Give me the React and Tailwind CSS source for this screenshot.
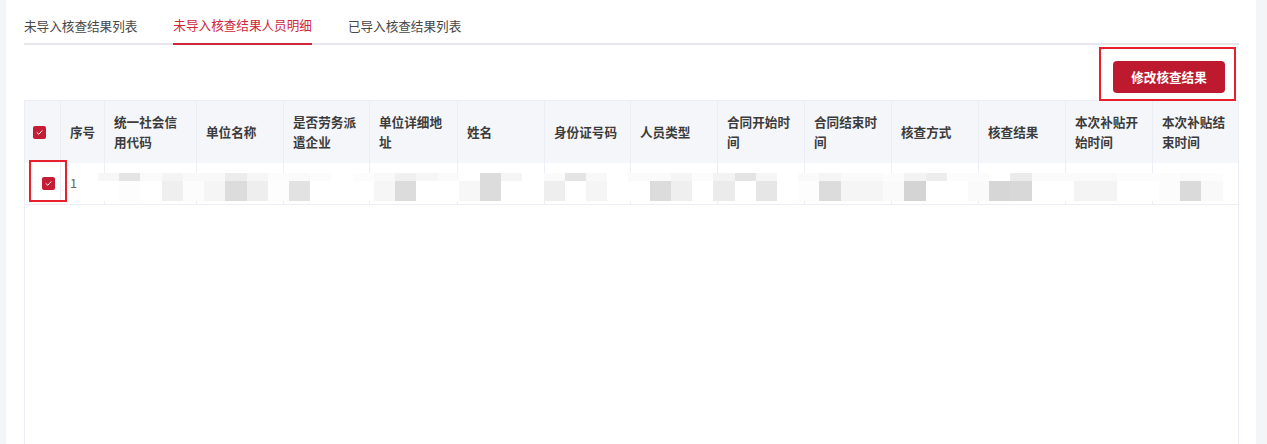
import React from "react";

const headers = [
  "序号",
  "统一社会信用代码",
  "单位名称",
  "是否劳务派遣企业",
  "单位详细地址",
  "姓名",
  "身份证号码",
  "人员类型",
  "合同开始时间",
  "合同结束时间",
  "核查方式",
  "核查结果",
  "本次补贴开始时间",
  "本次补贴结束时间",
];

// masked cell contents: [lower tile, upper tile]
const W = "bg-white";
const tiles = [
  [W, "bg-[#f7f7f7]"],
  ["bg-[#fdfdfd]", "bg-[#e4e4e4]"],
  [W, "bg-[#fafafa]"],
  ["bg-[#efefef]", "bg-[#f4f4f4]"],
  ["bg-[#fcfcfc]", "bg-[#f9f9f9]"],
  ["bg-[#f5f5f5]", "bg-[#f9f9f9]"],
  ["bg-[#dcdcdc]", "bg-[#ececec]"],
  ["bg-[#eeeeee]", "bg-[#f6f6f6]"],
  ["bg-[#fdfdfd]", "bg-[#fcfcfc]"],
  ["bg-[#e2e2e2]", "bg-[#fafafa]"],
  [W, "bg-[#fcfcfc]"],
  [W, W],
  [W, "bg-[#fcfcfc]"],
  ["bg-[#f6f6f6]", "bg-[#f9f9f9]"],
  ["bg-[#dcdcdc]", "bg-[#f0f0f0]"],
  [W, "bg-[#f6f6f6]"],
  [W, "bg-[#fafafa]"],
  ["bg-[#f7f7f7]", W],
  ["bg-[#dcdcdc]", "bg-[#dcdcdc]"],
  [W, "bg-[#f5f5f5]"],
  [W, W],
  ["bg-[#eeeeee]", "bg-[#fafafa]"],
  [W, "bg-[#e4e4e4]"],
  ["bg-[#f5f5f5]", "bg-[#f8f8f8]"],
  [W, W],
  [W, "bg-[#fafafa]"],
  ["bg-[#dcdcdc]", "bg-[#fafafa]"],
  ["bg-[#efefef]", "bg-[#f5f5f5]"],
  [W, "bg-[#fcfcfc]"],
  ["bg-[#ebebeb]", "bg-[#f3f3f3]"],
  [W, "bg-[#e4e4e4]"],
  ["bg-[#e6e6e6]", "bg-[#f6f6f6]"],
  [W, W],
  ["bg-[#fdfdfd]", "bg-[#fafafa]"],
  ["bg-[#dcdcdc]", "bg-[#f5f5f5]"],
  ["bg-[#f5f5f5]", "bg-[#fafafa]"],
  ["bg-[#f5f5f5]", "bg-[#fafafa]"],
  ["bg-[#fafafa]", "bg-[#fcfcfc]"],
  ["bg-[#d4d4d4]", "bg-[#f3f3f3]"],
  [W, "bg-[#ededed]"],
  [W, "bg-[#fcfcfc]"],
  ["bg-[#fafafa]", "bg-[#fcfcfc]"],
  ["bg-[#d6d6d6]", W],
  ["bg-[#d8d8d8]", "bg-[#ebebeb]"],
  [W, "bg-[#fafafa]"],
  [W, "bg-[#fafafa]"],
  ["bg-[#f4f4f4]", "bg-[#fafafa]"],
  ["bg-[#f4f4f4]", "bg-[#fafafa]"],
  [W, "bg-[#fcfcfc]"],
  [W, "bg-[#fcfcfc]"],
  ["bg-[#fcfcfc]", "bg-[#fcfcfc]"],
  ["bg-[#dadada]", "bg-[#fafafa]"],
  ["bg-[#f9f9f9]", "bg-[#fcfcfc]"],
];

function CheckBox() {
  return (
    <span className="flex h-[13px] w-[13px] items-center justify-center rounded-[2px] bg-[#c41d35]">
      <svg width="9" height="9" viewBox="0 0 9 9" fill="none">
        <path d="M2 4.6 L3.8 6.3 L7 2.8" stroke="#fff" strokeWidth="1" strokeLinecap="round" strokeLinejoin="round" />
      </svg>
    </span>
  );
}

const cols =
  "grid grid-cols-[35px_44px_92px_87px_86px_88px_87px_86px_87px_87px_87px_87px_87px_87px_86px]";

export default function App() {
  return (
    <div className="flex h-[444px] w-[1267px] overflow-hidden bg-[#f4f5f7] font-['Noto_Sans_CJK_SC','Noto_Sans',sans-serif] text-[12.6px]">
      <div className="ml-[6px] flex w-[1250px] flex-col bg-white pl-[18px] pr-[17px]">
        {/* tabs */}
        <div className="mt-[8px] flex h-[37px] border-b-2 border-[#e6e7ec] pr-[1px]">
          <div className="-mb-[2px] flex items-center text-[#474747]">未导入核查结果列表</div>
          <div className="-mb-[2px] ml-[36px] flex items-center border-b-2 border-[#d0263b] text-[#d0263b]">
            未导入核查结果人员明细
          </div>
          <div className="-mb-[2px] ml-[36px] flex items-center text-[#474747]">已导入核查结果列表</div>
        </div>

        {/* actions */}
        <div className="flex h-[55px] justify-end pr-[14px]">
          <div className="relative mt-[16px] h-[32px]">
            <button className="flex h-[32px] w-[112px] items-center justify-center rounded-[4px] bg-[#be1a2f] font-bold text-white">
              修改核查结果
            </button>
            <div className="pointer-events-none absolute -bottom-[8px] -left-[14px] -right-[11px] -top-[14px] border-2 border-[#e8202e]" />
          </div>
        </div>

        {/* table */}
        <div className="flex-1 border border-[#ebeef5] border-b-0">
          <div className={`${cols} h-[62px] bg-[#f5f6fa] font-bold leading-[20.5px] text-[#3c3c3c]`}>
            <div className="flex items-center pl-[8px]">
              <CheckBox />
            </div>
            {headers.map((h, i) => (
              <div
                key={h}
                className={
                  i === 0
                    ? "flex items-center whitespace-nowrap border-l border-[#ebeef5] pl-[9px]"
                    : "flex items-center border-l border-[#ebeef5] pl-[9px] pr-[10px]"
                }
              >
                <span>{h}</span>
              </div>
            ))}
          </div>
          <div className={`${cols} relative h-[42px] border-b border-[#ebeef5]`}>
            <div className="relative flex items-center pl-[17px]">
              <CheckBox />
              <div className="pointer-events-none absolute left-[4px] top-[-3px] h-[42px] w-[38px] border-2 border-[#e8202e]" />
            </div>
            <div className="flex items-center border-l border-[#ebeef5] pl-[9px] text-[#666666]">1</div>
            {headers.slice(1).map((h) => (
              <div key={h} className="border-l border-[#ebeef5]" />
            ))}
            <div className="absolute left-[73px] top-[10px] flex">
              {tiles.map((t, i) => (
                <div key={i} className="flex w-[21.23px] flex-col">
                  <div className={`h-[8px] ${t[1]}`} />
                  <div className={`h-[20px] ${t[0]}`} />
                </div>
              ))}
            </div>
          </div>
        </div>
      </div>
    </div>
  );
}
